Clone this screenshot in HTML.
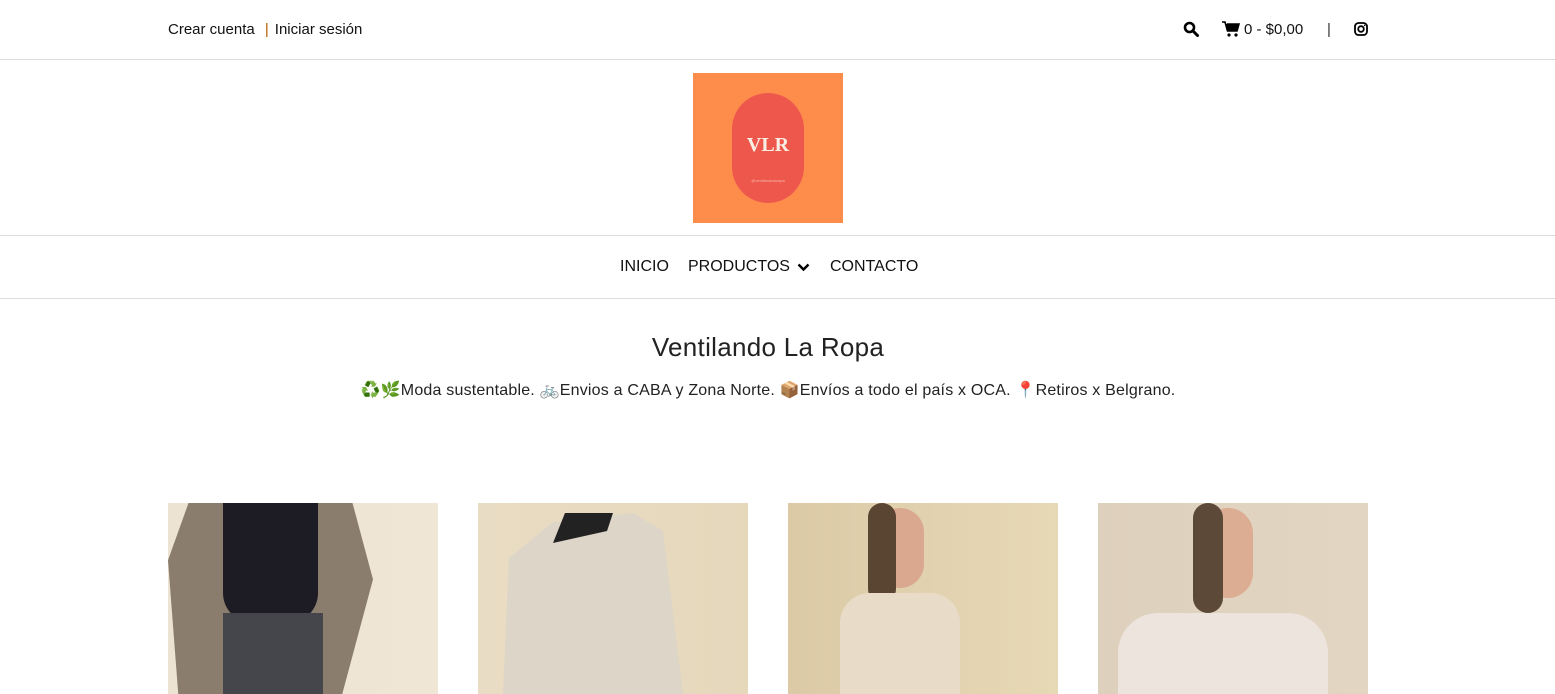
<!DOCTYPE html>
<html><head><meta charset="utf-8"><style>
*{margin:0;padding:0;box-sizing:border-box}
body{width:1555px;height:694px;overflow:hidden;background:#fff;font-family:"Liberation Sans","DejaVu Sans",sans-serif;color:#111;position:relative}
.abs{position:absolute}
.top{top:0;left:0;width:1555px;height:60px;border-bottom:1px solid #ddd}
.nav{top:235px;left:0;width:1555px;height:64px;border-top:1px solid #ddd;border-bottom:1px solid #ddd}
.ph{top:503px;width:270px;height:191px;overflow:hidden}
</style></head><body>
<div class="abs top"></div>
<div class="abs" style="left:168px;top:21px;font-size:15px">Crear cuenta <span style="color:#b35c00;margin:0 6px">|</span>Iniciar sesión</div>
<svg class="abs" style="left:1183px;top:21px" width="16" height="16" viewBox="0 0 16 16"><circle cx="6.5" cy="6.5" r="4.5" fill="none" stroke="#000" stroke-width="2.6"/><path d="M10 10l4.5 4.5" stroke="#000" stroke-width="3" stroke-linecap="round"/></svg>
<svg class="abs" style="left:1222px;top:21px" width="18" height="16" viewBox="0 0 18 16"><path d="M0 1h3l2.5 9h9.5l2-7H5" fill="#000" stroke="#000" stroke-width="1.6"/><path d="M4.5 3h12.5l-2 7h-9.5z" fill="#000"/><circle cx="7" cy="14" r="1.6" fill="#000"/><circle cx="14" cy="14" r="1.6" fill="#000"/></svg>
<div class="abs" style="left:1244px;top:21px;font-size:15px">0 - $0,00</div>
<div class="abs" style="left:1327px;top:21px;font-size:15px;color:#333">|</div>
<svg class="abs" style="left:1354px;top:22px" width="14" height="14" viewBox="0 0 14 14"><rect x="1" y="1" width="12" height="12" rx="3.5" fill="none" stroke="#000" stroke-width="1.8"/><circle cx="7" cy="7" r="2.8" fill="none" stroke="#000" stroke-width="1.8"/><circle cx="10.6" cy="3.4" r=".8" fill="#000"/></svg>
<div class="abs" style="left:693px;top:73px;width:150px;height:150px;background:#fe8d4b"></div>
<div class="abs" style="left:732px;top:93px;width:72px;height:110px;border-radius:36px;background:#ee584c"></div>
<div class="abs" style="left:732px;top:134px;width:72px;text-align:center;color:#fbeee4;font-family:'Liberation Serif',serif;font-weight:bold;font-size:20px">VLR</div>
<div class="abs" style="left:732px;top:178px;width:72px;text-align:center;color:#f7b7a8;font-size:4px">@ventilandolaropa</div>
<div class="abs nav"></div>
<div class="abs" style="left:620px;top:258px;font-size:16px">INICIO</div>
<div class="abs" style="left:688px;top:258px;font-size:16px">PRODUCTOS</div>
<svg class="abs" style="left:797px;top:263px" width="13" height="9" viewBox="0 0 13 9"><path d="M1.5 1.5l5 5 5-5" fill="none" stroke="#000" stroke-width="2.4"/></svg>
<div class="abs" style="left:830px;top:258px;font-size:16px">CONTACTO</div>
<div class="abs" style="left:0;top:332px;width:1536px;text-align:center;font-size:26px;font-weight:300;color:#222;letter-spacing:0.3px">Ventilando La Ropa</div>
<div class="abs" style="left:0;top:380px;width:1536px;text-align:center;font-size:16px;color:#222;letter-spacing:0.2px">♻️🌿Moda sustentable. 🚲Envios a CABA y Zona Norte. 📦Envíos a todo el país x OCA. 📍Retiros x Belgrano.</div>
<div class="abs ph" style="left:168px;background:linear-gradient(90deg,#ece3d3,#f0e6d6)">
 <div class="abs" style="left:0;top:0;width:205px;height:191px;background:#8a7d6e;clip-path:polygon(10% 0,90% 0,100% 40%,85% 100%,5% 100%,0 30%)"></div>
 <div class="abs" style="left:55px;top:0;width:95px;height:120px;background:#1d1c24;border-radius:0 0 30px 30px"></div>
 <div class="abs" style="left:55px;top:110px;width:100px;height:81px;background:#45464c"></div>
</div>
<div class="abs ph" style="left:478px;background:linear-gradient(90deg,#e9dcc4,#e6d8bb)">
 <div class="abs" style="left:15px;top:10px;width:200px;height:181px;background:#ddd5c7;clip-path:polygon(30% 5%,70% 0,85% 10%,95% 100%,5% 100%,8% 25%)"></div>
 <div class="abs" style="left:75px;top:10px;width:60px;height:30px;background:#222;clip-path:polygon(0 100%,20% 0,100% 0,90% 60%)"></div>
</div>
<div class="abs ph" style="left:788px;background:linear-gradient(90deg,#dccaa6,#e7d8b6)">
 <div class="abs" style="left:88px;top:5px;width:48px;height:80px;background:#d9a88e;border-radius:24px"></div>
 <div class="abs" style="left:80px;top:0;width:28px;height:100px;background:#5a4533;border-radius:14px"></div>
 <div class="abs" style="left:52px;top:90px;width:120px;height:101px;background:#e8dcc8;border-radius:30px 30px 0 0"></div>
</div>
<div class="abs ph" style="left:1098px;background:linear-gradient(90deg,#ddd0bc,#e2d6c2)">
 <div class="abs" style="left:105px;top:5px;width:50px;height:90px;background:#dcac93;border-radius:25px"></div>
 <div class="abs" style="left:95px;top:0;width:30px;height:110px;background:#5c4937;border-radius:15px"></div>
 <div class="abs" style="left:20px;top:110px;width:210px;height:81px;background:#eee4de;border-radius:40px 40px 0 0"></div>
</div>
</body></html>
